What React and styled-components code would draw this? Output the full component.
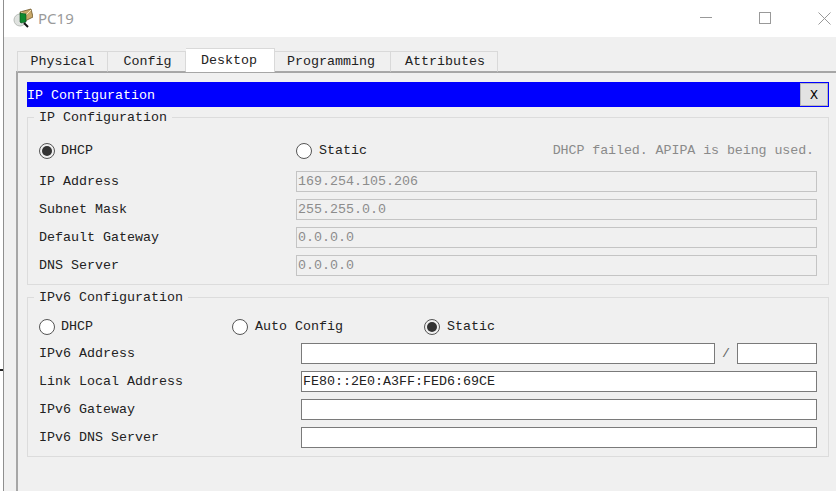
import styled, { createGlobalStyle } from "styled-components";

const GlobalStyle = createGlobalStyle`
  html, body {
    margin: 0;
    background: #fff;
  }
  body {
    font-family: "Liberation Mono", "DejaVu Sans Mono", monospace;
    font-size: 13.33px;
    color: #222;
    overflow: hidden;
  }
`;

const Page = styled.div`
  width: 836px;
  height: 491px;
  padding-left: 3px;
  box-sizing: border-box;
  overflow: hidden;
  position: relative;
`;

// stray mark at the left edge of the capture
const EdgeMark = styled.i`
  position: absolute;
  left: 0;
  top: 369px;
  width: 3px;
  height: 2px;
  background: #222;
`;

const Window = styled.div`
  height: 100%;
  border-left: 1px solid #8f8f8f;
  background: #f0f0f0;
  display: flex;
  flex-direction: column;
`;

const TitleBar = styled.div`
  height: 37px;
  flex: none;
  background: #fff;
  display: flex;
  align-items: center;
  padding-left: 9px;
`;

const AppName = styled.span`
  font-family: "Noto Sans", "Open Sans", sans-serif;
  font-size: 15px;
  color: #9a9a9a;
  margin-left: 5px;
  margin-bottom: 2px;
`;

const WindowControls = styled.div`
  margin-left: auto;
  display: flex;
  align-items: center;
  padding-right: 5px;
  gap: 47px;
  height: 100%;
  padding-bottom: 1px;
  box-sizing: border-box;
`;

const Body = styled.div`
  flex: 1;
  padding: 11px 0 0 12px;
  display: flex;
  flex-direction: column;
  min-height: 0;
`;

const TabStrip = styled.div`
  display: flex;
  align-items: flex-end;
  height: 24px;
  flex: none;
  position: relative;
  z-index: 1;
  margin-left: 1px;
`;

const Tab = styled.div`
  width: ${(p) => p.$w}px;
  height: ${(p) => (p.$active ? 24 : 21)}px;
  box-sizing: border-box;
  display: flex;
  align-items: center;
  justify-content: center;
  text-indent: ${(p) => p.$indent || 0}px;
  background: ${(p) => (p.$active ? "#fff" : "#f0f0f0")};
  border: 1px solid #d9d9d9;
  border-left-width: ${(p) => (p.$first ? 1 : 0)}px;
  border-bottom: ${(p) => (p.$active ? "0" : "1px solid #a8a8a8")};
  color: #222;
`;

const Panel = styled.div`
  flex: 1;
  border-top: 2px solid #a6a6a6;
  border-left: 2px solid #a6a6a6;
  margin-top: -1px;
  padding: 9px 7px 0 9px;
  min-height: 0;
`;

const Header = styled.div`
  width: 802px;
  height: 25px;
  box-sizing: border-box;
  background: #0000ff;
  color: #fff;
  display: flex;
  align-items: center;
  justify-content: space-between;
  padding: 1px 1px 1px 0;
`;

const HeaderTitle = styled.span`
  padding-top: 2px;
`;

const CloseButton = styled.div`
  width: 28px;
  height: 23px;
  box-sizing: border-box;
  padding-top: 2px;
  background: #e2e2e2;
  border: 1px solid #b8b8b8;
  color: #000;
  display: flex;
  align-items: center;
  justify-content: center;
`;

const Group = styled.fieldset`
  width: 802px;
  box-sizing: border-box;
  margin: ${(p) => p.$top}px 0 0;
  padding: ${(p) => p.$pad}px 0 ${(p) => p.$bottom}px 11px;
  border: 1px solid #dcdcdc;
  min-width: 0;
`;

const GroupTitle = styled.legend`
  margin-left: -5px;
  padding: 0 5px;
  line-height: 18px;
  height: 16px;
`;

const RadioRow = styled.div`
  display: grid;
  grid-template-columns: ${(p) => p.$cols};
  height: 21px;
  align-items: center;
  margin-bottom: ${(p) => p.$gap}px;
  padding-right: 14px;
`;

const RadioOption = styled.label`
  display: flex;
  align-items: center;
  gap: ${(p) => p.$gap}px;
  line-height: 23px;
`;

const RadioCircle = styled.span`
  width: 16px;
  height: 16px;
  box-sizing: border-box;
  border-radius: 50%;
  border: 1px solid #555;
  background: ${(p) => (p.$on ? "#f0f0f0" : "#fff")};
  display: flex;
  align-items: center;
  justify-content: center;
  &::after {
    content: "";
    display: ${(p) => (p.$on ? "block" : "none")};
    width: 10px;
    height: 10px;
    border-radius: 50%;
    background: #333;
  }
`;

const StatusNote = styled.span`
  line-height: 23px;
  letter-spacing: -0.08px;
  color: #8a8a8a;
`;

const Fields = styled.div`
  display: flex;
  flex-direction: column;
  gap: 7px;
`;

const Field = styled.div`
  display: grid;
  grid-template-columns: ${(p) => p.$label}px 1fr;
  height: 21px;
  align-items: center;
  padding-right: 11px;
  line-height: 23px;
`;

const ValueBox = styled.div`
  height: 21px;
  box-sizing: border-box;
  line-height: 20px;
  padding-left: 1px;
  white-space: nowrap;
  background: ${(p) => (p.$disabled ? "#f0f0f0" : "#fff")};
  border: 1px solid ${(p) => (p.$disabled ? "#c4c4c4" : "#7a7a7a")};
  color: ${(p) => (p.$disabled ? "#8c8c8c" : "#222")};
`;

const PrefixInputs = styled.div`
  display: grid;
  grid-template-columns: 414px 22px 80px;
  align-items: center;
`;

const Slash = styled.span`
  text-align: center;
  color: #666;
`;

const PcIcon = () => (
  <svg width="20" height="21" viewBox="0 0 20 21">
    <circle cx="7" cy="12" r="6" fill="#dfe2df" stroke="#b8bcb8" />
    <path d="M7 4l11-3 2 8-8 4-3-1z" fill="#c9a869" stroke="#6b5426" strokeWidth=".8" />
    <path d="M8 4l5 3 5-5" fill="none" stroke="#f4e6c0" />
    <path d="M7 5l6 1v8l-5 1-1-1z" fill="#0f8a2e" stroke="#0a4f1c" strokeWidth=".6" />
    <path d="M11 15l4 4" stroke="#111" strokeWidth="2" />
  </svg>
);

const MinimizeIcon = () => (
  <svg width="12" height="12" viewBox="0 0 12 12">
    <path d="M0 5.5h12" stroke="#999" />
  </svg>
);

const MaximizeIcon = () => (
  <svg width="12" height="12" viewBox="0 0 12 12">
    <rect x=".5" y=".5" width="11" height="11" fill="none" stroke="#999" />
  </svg>
);

const CloseIcon = () => (
  <svg width="13" height="13" viewBox="0 0 13 13">
    <path d="M.5.5l12 12M12.5.5l-12 12" stroke="#999" fill="none" />
  </svg>
);

const tabs = [
  { name: "Physical", w: 91 },
  { name: "Config", w: 78, indent: 2 },
  { name: "Desktop", w: 89, indent: -2, active: true },
  { name: "Programming", w: 116, indent: -3 },
  { name: "Attributes", w: 107, indent: 2 },
];

const ipv4Rows = [
  ["IP Address", "169.254.105.206"],
  ["Subnet Mask", "255.255.0.0"],
  ["Default Gateway", "0.0.0.0"],
  ["DNS Server", "0.0.0.0"],
];

const Radio = ({ on, gap = 7, children }) => (
  <RadioOption $gap={gap}>
    <RadioCircle $on={on} />
    {children}
  </RadioOption>
);

export default function App() {
  return (
    <Page>
      <GlobalStyle />
      <EdgeMark />
      <Window>
        <TitleBar>
          <PcIcon />
          <AppName>PC19</AppName>
          <WindowControls>
            <MinimizeIcon />
            <MaximizeIcon />
            <CloseIcon />
          </WindowControls>
        </TitleBar>
        <Body>
          <TabStrip>
            {tabs.map((t, i) => (
              <Tab key={t.name} $w={t.w} $indent={t.indent} $active={t.active} $first={i === 0}>
                {t.name}
              </Tab>
            ))}
          </TabStrip>
          <Panel>
            <Header>
              <HeaderTitle>IP Configuration</HeaderTitle>
              <CloseButton>X</CloseButton>
            </Header>
            <Group $top={2} $pad={14} $bottom={9}>
              <GroupTitle>IP Configuration</GroupTitle>
              <RadioRow $cols="257px 1fr auto" $gap={10}>
                <Radio on gap={6}>DHCP</Radio>
                <Radio>Static</Radio>
                <StatusNote>DHCP failed. APIPA is being used.</StatusNote>
              </RadioRow>
              <Fields>
                {ipv4Rows.map(([label, value]) => (
                  <Field key={label} $label={257}>
                    <span>{label}</span>
                    <ValueBox $disabled>{value}</ValueBox>
                  </Field>
                ))}
              </Fields>
            </Group>
            <Group $top={4} $pad={10} $bottom={9}>
              <GroupTitle>IPv6 Configuration</GroupTitle>
              <RadioRow $cols="193px 192px 1fr" $gap={6}>
                <Radio gap={6}>DHCP</Radio>
                <Radio>Auto Config</Radio>
                <Radio on>Static</Radio>
              </RadioRow>
              <Fields>
                <Field $label={262}>
                  <span>IPv6 Address</span>
                  <PrefixInputs>
                    <ValueBox />
                    <Slash>/</Slash>
                    <ValueBox />
                  </PrefixInputs>
                </Field>
                <Field $label={262}>
                  <span>Link Local Address</span>
                  <ValueBox>FE80::2E0:A3FF:FED6:69CE</ValueBox>
                </Field>
                <Field $label={262}>
                  <span>IPv6 Gateway</span>
                  <ValueBox />
                </Field>
                <Field $label={262}>
                  <span>IPv6 DNS Server</span>
                  <ValueBox />
                </Field>
              </Fields>
            </Group>
          </Panel>
        </Body>
      </Window>
    </Page>
  );
}
